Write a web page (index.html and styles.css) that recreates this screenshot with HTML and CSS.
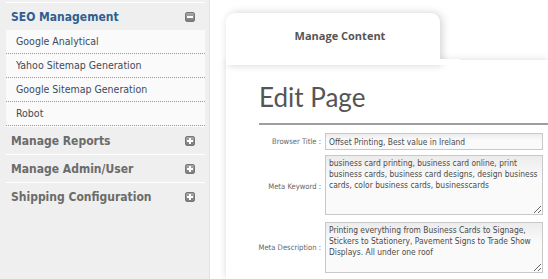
FILE: index.html
```html
<!DOCTYPE html>
<html lang="en">
<head>
  <meta charset="UTF-8">
  <title>Manage Content - Edit Page</title>
  <link rel="stylesheet" href="styles.css">
</head>
<body>
  <div class="sidebar">
    <div class="menu-group open">
      <div class="menu-head active">
        <span>SEO Management</span>
        <span class="toggle minus"></span>
      </div>
      <ul class="submenu">
        <li>Google Analytical</li>
        <li>Yahoo Sitemap Generation</li>
        <li>Google Sitemap Generation</li>
        <li>Robot</li>
      </ul>
    </div>
    <div class="menu-group">
      <div class="menu-head"><span>Manage Reports</span><span class="toggle plus"></span></div>
    </div>
    <div class="menu-group">
      <div class="menu-head"><span>Manage Admin/User</span><span class="toggle plus"></span></div>
    </div>
    <div class="menu-group">
      <div class="menu-head"><span>Shipping Configuration</span><span class="toggle plus"></span></div>
    </div>
  </div>

  <div class="content">
    <div class="tab">Manage Content</div>
    <div class="panel">
      <h1>Edit Page</h1>
      <div class="form">
        <label for="title">Browser Title :</label>
        <input id="title" type="text" value="Offset Printing, Best value in Ireland">

        <label for="keyword">Meta Keyword :</label>
        <textarea id="keyword" class="tall">business card printing, business card online, print business cards, business card designs, design business cards, color business cards, businesscards</textarea>

        <label for="desc">Meta Description :</label>
        <textarea id="desc">Printing everything from Business Cards to Signage, Stickers to Stationery, Pavement Signs to Trade Show Displays. All under one roof</textarea>
      </div>
    </div>
  </div>
</body>
</html>
```

FILE: styles.css
```css
:root {
  --side-bg: #efefef;
  --blue: #2f5f8f;
  --gray-text: #6b6b6b;
  --text: #555;
}

* {
  margin: 0;
  padding: 0;
  box-sizing: border-box;
}

body {
  font-family: "DejaVu Sans Condensed", "DejaVu Sans", sans-serif;
  font-stretch: condensed;
  background: #fff;
  display: flex;
  height: 279px;
  overflow: hidden;
}

/* sidebar */
.sidebar {
  width: 210px;
  flex-shrink: 0;
  background: var(--side-bg);
  border-right: 1px solid #e2e2e2;
  padding: 2px 4px 0 6px;
}

.menu-group {
  border-top: 1px solid #fff;
}

.menu-head {
  height: 27px;
  display: flex;
  align-items: center;
  justify-content: space-between;
  padding: 0 10px 0 5px;
  font-size: 12px;
  font-weight: bold;
  color: var(--gray-text);
}

.menu-head.active {
  color: var(--blue);
}

.toggle {
  width: 10px;
  height: 10px;
  border: 1px solid #777;
  border-radius: 2px;
  background: linear-gradient(#a8a8a8, #7c7c7c);
  position: relative;
}

.toggle::before,
.toggle::after {
  content: "";
  position: absolute;
  background: #fff;
}

.toggle::before {
  left: 1px;
  top: 3px;
  width: 6px;
  height: 2px;
}

.toggle.plus::after {
  left: 3px;
  top: 1px;
  width: 2px;
  height: 6px;
}

.submenu {
  list-style: none;
  background: #fafafa;
}

.submenu li {
  height: 24px;
  line-height: 23px;
  padding-left: 10px;
  font-size: 10.5px;
  color: #3d4a5a;
  border-bottom: 1px dotted #999;
}

/* content */
.content {
  flex: 1;
  padding: 13px 0 0 16px;
  display: flex;
  flex-direction: column;
  min-width: 0;
}

.tab {
  width: 214px;
  height: 52px;
  margin-bottom: -5px;
  padding: 15px 0 0 14px;
  background: #fff;
  border-radius: 9px 9px 0 0;
  box-shadow: 2px 0 8px rgba(0, 0, 0, 0.18);
  text-align: center;
  font-family: "Open Sans", sans-serif;
  font-stretch: normal;
  font-size: 11px;
  font-weight: bold;
  color: #555;
  position: relative;
  z-index: 1;
}

.tab::after {
  content: "";
  position: absolute;
  left: 0;
  right: -20px;
  bottom: 0;
  height: 6px;
  background: #fff;
}

.panel {
  flex: 1;
  background: #fff;
  box-shadow: 0 0 7px rgba(0, 0, 0, 0.15);
  padding: 18px 0 0 33px;
}

h1 {
  font-family: Lato, sans-serif;
  font-stretch: normal;
  font-weight: normal;
  font-size: 26px;
  line-height: 38px;
  color: #555;
  border-bottom: 2px solid #9e9e9e;
  padding-bottom: 7px;
  margin-right: -10px;
}

.form {
  display: grid;
  grid-template-columns: 82px 218px;
  column-gap: 4px;
  row-gap: 5px;
  align-items: center;
  margin: 8px 0 0 -20px;
}

label {
  font-size: 7.6px;
  color: #666;
  text-align: right;
  white-space: nowrap;
}

input, textarea {
  font-family: inherit;
  font-stretch: condensed;
  font-size: 8.4px;
  color: #4a4a4a;
  border: 1px solid #c8c8c8;
  background: linear-gradient(#ececec, #fafafa 40%);
  padding: 2px 3px;
  width: 100%;
}

input {
  height: 17px;
}

textarea {
  height: 51px;
  line-height: 11px;
  resize: vertical;
}

textarea.tall {
  height: 60px;
  margin-bottom: 2px;
}
```
